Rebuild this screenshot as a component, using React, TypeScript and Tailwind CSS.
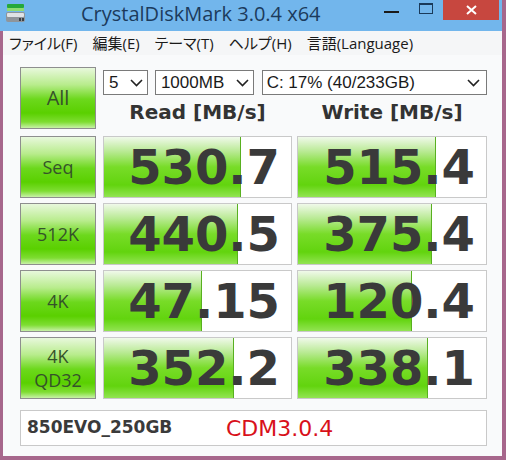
import React from 'react';

const NUM_FONT = "font-['DejaVu_Sans',sans-serif]";

const rows = [
  { label: 'Seq', read: '530.7', write: '515.4', readBar: 'w-[137px]', writeBar: 'w-[138px]' },
  { label: '512K', read: '440.5', write: '375.4', readBar: 'w-[134px]', writeBar: 'w-[134px]' },
  { label: '4K', read: '47.15', write: '120.4', readBar: 'w-[98px]', writeBar: 'w-[114px]' },
  { label: 'QD32', read: '352.2', write: '338.1', readBar: 'w-[130px]', writeBar: 'w-[130px]' },
];

const btnClass =
  'w-[76px] h-[62px] shrink-0 border border-[#8e8e8e] flex flex-col items-center justify-center leading-[24px] text-[#35522a] text-[18px] font-["Open_Sans",sans-serif] bg-[linear-gradient(to_bottom,#e8f8dc_0%,#b8ec8c_28%,#6cd81c_52%,#5ad000_75%,#7edd32_90%,#c8f1a8_100%)]';

function Chevron() {
  return (
    <svg width="13" height="8" viewBox="0 0 13 8" className="shrink-0">
      <polyline points="1,1 6.5,6.5 12,1" fill="none" stroke="#222" strokeWidth="1.6" />
    </svg>
  );
}

function ValueBox({ value, bar, wide }: { value: string; bar: string; wide: boolean }) {
  return (
    <div
      className={`relative h-[62px] ${wide ? 'w-[190px]' : 'w-[189px]'} border border-[#c9c9c9] bg-white`}
    >
      <div
        className={`absolute left-0 top-0 bottom-0 ${bar} border-r border-[#58b020] bg-[linear-gradient(to_bottom,#f0f9ea_0%,#b9ea94_24%,#78dc28_50%,#62d40e_80%,#92e452_100%)]`}
      />
      <div
        className={`relative h-full flex items-center justify-end pr-[11px] text-[48px] font-bold text-[#3a3a3a] ${NUM_FONT}`}
      >
        {value}
      </div>
    </div>
  );
}

export default function App() {
  return (
    <div className="w-[506px] h-[460px] bg-[#a7678c] pl-[3px] pr-[4px] pb-[4px] flex flex-col">
      {/* Title bar */}
      <div className="h-[31px] bg-[#72b6ec] relative flex items-center shrink-0 -ml-[3px] pl-[6px]">
        <svg width="20" height="19" viewBox="0 0 20 19" className="mt-[-4px]">
          <rect x="1" y="0" width="17" height="4" rx="1" fill="#25a83a" />
          <rect x="1" y="4" width="17" height="3" fill="#8fdc70" />
          <rect x="0" y="8" width="19" height="10" rx="2" fill="#8f959b" />
          <rect x="1" y="9" width="17" height="4" rx="1" fill="#dfe3e6" />
          <rect x="13" y="14" width="2" height="3" fill="#3d4247" />
          <rect x="16" y="14" width="2" height="3" fill="#3d4247" />
        </svg>
        <div className="ml-[55px] text-[20px] text-[#1c3b5c] font-['Open_Sans',sans-serif] leading-none mt-[-4px]">
          CrystalDiskMark 3.0.4 x64
        </div>
        <div className="absolute left-[384px] top-[11px] w-[15px] h-[2px] bg-[#1a1a1a]" />
        <div className="absolute left-[419px] top-[3px] w-[14px] h-[11px] border border-[#1a3a5a] border-t-2" />
        <div className="absolute left-[443px] top-0 w-[56px] h-[20px] bg-[#c7473f] flex items-center justify-center">
          <svg width="11" height="10" viewBox="0 0 11 10">
            <path d="M1 1 L10 9 M10 1 L1 9" stroke="#fff" strokeWidth="2" />
          </svg>
        </div>
      </div>

      {/* Menu bar */}
      <div className="h-[24px] bg-[#f5f6f7] flex items-center gap-[15px] pl-[6px] text-[15px] text-[#1a1a1a] font-['Open_Sans','Noto_Sans_CJK_JP',sans-serif] [font-feature-settings:'palt'] shrink-0">
        <span>ファイル(F)</span>
        <span>編集(E)</span>
        <span>テーマ(T)</span>
        <span>ヘルプ(H)</span>
        <span>言語(Language)</span>
      </div>

      {/* Content */}
      <div className="flex-1 bg-[#f9fafb] pl-[17px] pt-[12px]">
        <div className="flex gap-[7px]">
          <div className={`${btnClass} text-[20px]`}>All</div>
          <div className="w-[384px] flex flex-col">
            <div className="mt-[3px] h-[25px] flex gap-[7px] text-[17px] text-[#1a1a1a] font-['Liberation_Sans',sans-serif]">
              <div className="w-[45px] border border-[#7a7a7a] bg-white flex items-center justify-between pl-[5px] pr-[4px]">
                <span>5</span>
                <Chevron />
              </div>
              <div className="w-[99px] border border-[#7a7a7a] bg-white flex items-center justify-between pl-[5px] pr-[4px]">
                <span>1000MB</span>
                <Chevron />
              </div>
              <div className="w-[226px] ml-[1px] border border-[#7a7a7a] bg-white flex items-center justify-between pl-[4px] pr-[6px]">
                <span>C: 17% (40/233GB)</span>
                <Chevron />
              </div>
            </div>
            <div
              className={`flex-1 flex gap-[5px] items-center text-[20px] font-bold text-[#333] ${NUM_FONT}`}
            >
              <div className="w-[189px] text-center">Read [MB/s]</div>
              <div className="w-[190px] text-center">Write [MB/s]</div>
            </div>
          </div>
        </div>

        <div className="mt-[7px] flex flex-col gap-[5px]">
          {rows.map((r) => (
            <div key={r.label} className="flex">
              <div className={btnClass}>
                {r.label === 'QD32' ? (
                  <>
                    <span>4K</span>
                    <span>QD32</span>
                  </>
                ) : (
                  <span>{r.label}</span>
                )}
              </div>
              <div className="ml-[7px] flex gap-[5px]">
                <ValueBox value={r.read} bar={r.readBar} wide={false} />
                <ValueBox value={r.write} bar={r.writeBar} wide={true} />
              </div>
            </div>
          ))}
        </div>

        <div className="mt-[11px] w-[467px] h-[36px] border border-[#c9c9c9] bg-white flex items-center pl-[6px]">
          <span className={`w-[199px] text-[17px] font-bold text-[#3a3a3a] ${NUM_FONT}`}>850EVO_250GB</span>
          <span className={`text-[22px] text-[#d8101a] ${NUM_FONT}`}>CDM3.0.4</span>
        </div>
      </div>
    </div>
  );
}
